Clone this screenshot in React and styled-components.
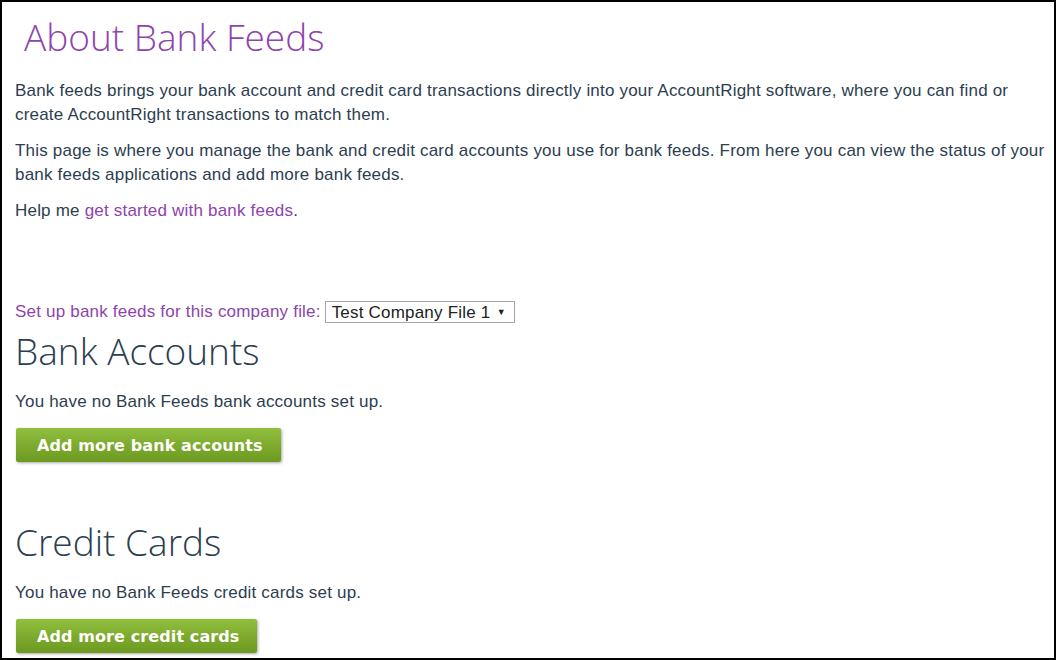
import React, { useState } from 'react';
import styled, { createGlobalStyle } from 'styled-components';

const GlobalStyle = createGlobalStyle`
  html, body {
    margin: 0;
    padding: 0;
    background: #ffffff;
  }
  body {
    font-family: "Liberation Sans", Arial, sans-serif;
    color: #2c3e50;
  }
`;

const Frame = styled.div`
  width: 1056px;
  height: 660px;
  box-sizing: border-box;
  border: 2px solid #000;
  padding: 0 0 0 13px;
  overflow: hidden;
`;

const Title = styled.h1`
  margin: 11px 0 0;
  padding-left: 9px;
  font-family: "Open Sans", sans-serif;
  font-weight: 300;
  font-size: 37px;
  line-height: 48px;
  color: #8e44ad;
`;

const Intro = styled.div`
  margin-top: 18px;
`;

const Text = styled.p`
  margin: 0 0 12px;
  font-size: 17px;
  letter-spacing: 0.2px;
  line-height: 24px;
  color: #2c3e50;

  &:last-child {
    margin-bottom: 0;
  }
`;

const Link = styled.a`
  color: #8e44ad;
  text-decoration: none;
  cursor: pointer;
`;

const CompanyRow = styled.div`
  display: flex;
  align-items: center;
  gap: 4px;
  margin-top: 77px;
  font-size: 17px;
  letter-spacing: 0.2px;
  line-height: 24px;
  color: #8e44ad;
`;

const SelectBox = styled.label`
  display: inline-flex;
  align-items: center;
  height: 22px;
  box-sizing: border-box;
  border: 1px solid #a6a6a6;
  padding: 0 8px 0 6px;
  gap: 6px;
  background: #fff;
`;

const Select = styled.select`
  appearance: none;
  border: none;
  outline: none;
  background: transparent;
  padding: 0;
  margin: 0;
  font-family: "Liberation Sans", Arial, sans-serif;
  font-size: 17px;
  letter-spacing: 0.2px;
  color: #222;
`;

const Arrow = styled.span`
  font-size: 9px;
  color: #222;
`;

const Section = styled.section`
  margin-top: ${p => p.$gap}px;
`;

const Heading = styled.h2`
  margin: 0 0 19px;
  font-family: "Open Sans", sans-serif;
  font-weight: 300;
  font-size: 37px;
  line-height: 40px;
  color: #2c3e50;
`;

const Note = styled.p`
  margin: 0 0 14px;
  font-size: 17px;
  letter-spacing: 0.2px;
  line-height: 24px;
  color: #2c3e50;
`;

const GreenButton = styled.button`
  display: block;
  height: 34px;
  margin-left: 1px;
  padding: 0 18px 0 21px;
  border: none;
  border-radius: 2px;
  background: linear-gradient(to bottom, #90bf3e 0%, #7eab2e 50%, #6c9a21 100%);
  box-shadow: 1px 1px 3px rgba(0, 0, 0, 0.35);
  color: #fff;
  font-family: "DejaVu Sans", Verdana, sans-serif;
  font-weight: bold;
  font-size: 16px;
  letter-spacing: 0.1px;
  cursor: pointer;
`;

const App = () => {
  const [company, setCompany] = useState('Test Company File 1');

  return (
    <>
      <GlobalStyle />
      <Frame>
        <Title>About Bank Feeds</Title>
        <Intro>
          <Text>
            Bank feeds brings your bank account and credit card transactions directly into your AccountRight software, where you can find or create AccountRight transactions to match them.
          </Text>
          <Text>
            This page is where you manage the bank and credit card accounts you use for bank feeds. From here you can view the status of your bank feeds applications and add more bank feeds.
          </Text>
          <Text>
            Help me <Link>get started with bank feeds</Link>.
          </Text>
        </Intro>

        <CompanyRow>
          <span>Set up bank feeds for this company file:</span>
          <SelectBox>
            <Select value={company} onChange={e => setCompany(e.target.value)}>
              <option>Test Company File 1</option>
              <option>Test Company File 2</option>
            </Select>
            <Arrow>▼</Arrow>
          </SelectBox>
        </CompanyRow>

        <Section $gap={7}>
          <Heading>Bank Accounts</Heading>
          <Note>You have no Bank Feeds bank accounts set up.</Note>
          <GreenButton>Add more bank accounts</GreenButton>
        </Section>

        <Section $gap={60}>
          <Heading>Credit Cards</Heading>
          <Note>You have no Bank Feeds credit cards set up.</Note>
          <GreenButton>Add more credit cards</GreenButton>
        </Section>
      </Frame>
    </>
  );
};

export default App;
